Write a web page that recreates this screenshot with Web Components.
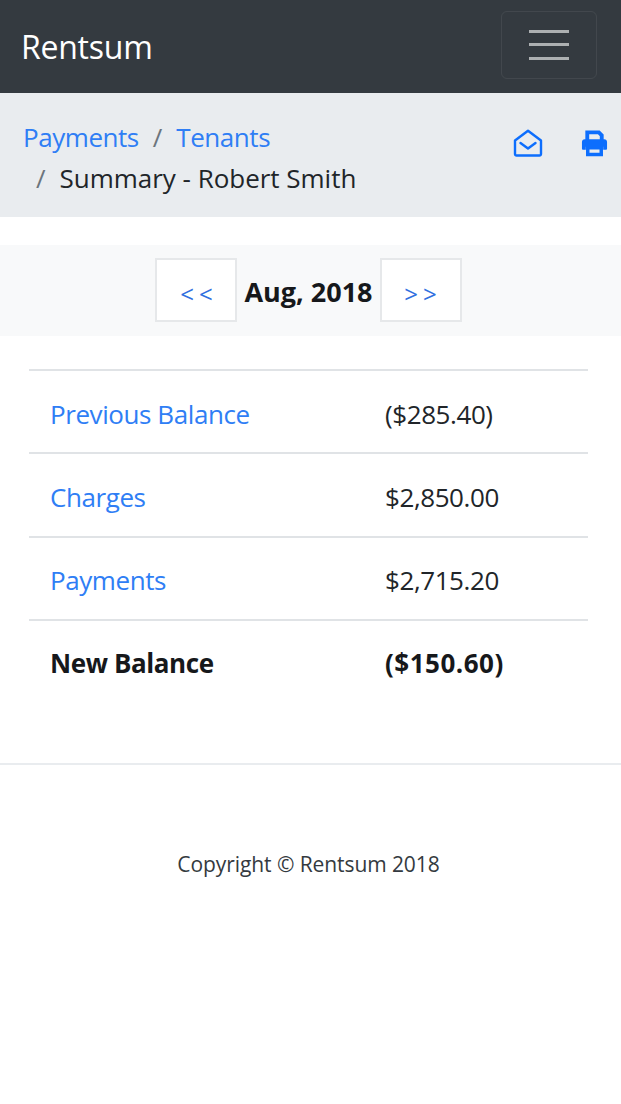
<!DOCTYPE html>
<html>
<head>
<meta charset="utf-8">
<title>Rentsum</title>
<style>
html, body { margin: 0; padding: 0; background: #fff; }
body { font-family: 'Open Sans', 'Noto Sans', 'Liberation Sans', sans-serif; color: #212529; font-size: 24px; }
</style>
</head>
<body>
<rs-navbar brand="Rentsum"></rs-navbar>
<rs-crumbs></rs-crumbs>
<rs-pager month="Aug, 2018"></rs-pager>
<rs-summary></rs-summary>
<rs-footer></rs-footer>
<script>
// Small page chrome for the tenant summary view.

class RsNavbar extends HTMLElement {
  connectedCallback() {
    this.attachShadow({ mode: 'open' });
    this.shadowRoot.innerHTML = `
<style>
:host { display: flex; align-items: center; justify-content: space-between; height: 93px; box-sizing: border-box; padding: 0 24px 4px 21px; background: #343a40; }
.brand { color: #fff; font-size: 32px; letter-spacing: -0.25px; line-height: 40px; padding-top: 4px; }
.toggler { width: 96px; height: 68px; box-sizing: border-box; border: 1.5px solid rgba(255,255,255,0.07); border-radius: 6px; display: flex; align-items: center; justify-content: center; }
svg { width: 42px; height: 44px; display: block; }
</style>
<span class="brand">${this.getAttribute('brand')}</span>
<div class="toggler">
  <svg viewBox="0 0 42 44"><path d="M1 8.5H41M1 21.5H41M1 35.5H41" stroke="rgba(255,255,255,0.6)" stroke-width="3" fill="none"/></svg>
</div>`;
  }
}

class RsCrumbs extends HTMLElement {
  connectedCallback() {
    this.attachShadow({ mode: 'open' });
    this.shadowRoot.innerHTML = `
<style>
:host { display: flex; justify-content: space-between; height: 124px; box-sizing: border-box; padding: 25px 13px 0 23px; background: #e9ecef; font-size: 26px; line-height: 40px; }
a { color: #2f7ef5; text-decoration: none; letter-spacing: -0.45px; }
.sep { color: #6c757d; padding: 0 14px; }
.row { display: block; white-space: nowrap; }
.row.first { margin-top: -1px; margin-bottom: 1px; }
.row.second { margin-left: -1px; letter-spacing: -0.02px; }
.icons { display: flex; gap: 38px; padding-top: 11px; align-items: flex-start; }
svg { display: block; height: 28px; fill: none; }
</style>
<div>
  <span class="row first"><a href="#">Payments</a><span class="sep">/</span><a href="#">Tenants</a></span>
  <span class="row second"><span class="sep">/</span>Summary - Robert Smith</span>
</div>
<div class="icons">
  <svg viewBox="0 0 30 28" width="30"><path d="M2 11.5 15 1.8 28 11.5V25a1.5 1.5 0 0 1-1.5 1.5h-23A1.5 1.5 0 0 1 2 25Z" stroke="#0d6efd" stroke-width="2.4" stroke-linejoin="round"/><path d="M7.5 14 15 19.5 22.5 14" stroke="#0d6efd" stroke-width="2.4" stroke-linecap="round" stroke-linejoin="round"/></svg>
  <svg viewBox="0 0 28 28" width="27"><path d="M6.5 12V3h12l3 3v6" stroke="#0d6efd" stroke-width="4"/><path d="M4 10h20a3 3 0 0 1 3 3v7a1 1 0 0 1-1 1h-3v-3H5v3H2a1 1 0 0 1-1-1v-7a3 3 0 0 1 3-3Z" fill="#0d6efd"/><path d="M7 19h14v7H7Z" stroke="#0d6efd" stroke-width="3.6"/></svg>
</div>`;
  }
}

class RsPager extends HTMLElement {
  connectedCallback() {
    this.attachShadow({ mode: 'open' });
    this.shadowRoot.innerHTML = `
<style>
:host { display: flex; align-items: flex-start; justify-content: center; gap: 7px; height: 91px; box-sizing: border-box; padding: 13px 4px 0 0; margin-top: 28px; background: #f8f9fa; }
.btn { width: 82px; height: 64px; box-sizing: border-box; background: #fff; border: 2px solid #e6e8ea; color: #2f6fe0; font-size: 24px; letter-spacing: 5px; display: flex; align-items: center; justify-content: center; padding: 6px 0 0 5px; text-decoration: none; }
.month { font-weight: 700; font-size: 27px; line-height: 65px; color: #16181b; padding-top: 1px; }
</style>
<a class="btn" href="#">&lt;&lt;</a>
<span class="month">${this.getAttribute('month')}</span>
<a class="btn" href="#">&gt;&gt;</a>`;
  }
}

const RS_ROWS = [
  ['Previous Balance', '($285.40)'],
  ['Charges', '$2,850.00'],
  ['Payments', '$2,715.20'],
];

class RsSummary extends HTMLElement {
  connectedCallback() {
    this.attachShadow({ mode: 'open' });
    const rows = RS_ROWS.map(r => `<div class="row"><a href="#">${r[0]}</a><span>${r[1]}</span></div>`).join('');
    this.shadowRoot.innerHTML = `
<style>
:host { display: block; margin: 33px 33px 0 29px; font-size: 26px; letter-spacing: -0.42px; color: #212529; }
.row { display: grid; grid-template-columns: 335px 1fr; align-items: center; height: 83.4px; box-sizing: border-box; padding: 4px 0 0 21px; border-top: 2px solid #e0e3e6; }
a { color: #2f7ef5; text-decoration: none; }
.total { font-weight: 700; color: #16181b; letter-spacing: -0.4px; padding-top: 3px; }
.total span + span { letter-spacing: 0.5px; }
</style>
${rows}
<div class="row total"><span>New Balance</span><span>($150.60)</span></div>`;
  }
}

class RsFooter extends HTMLElement {
  connectedCallback() {
    this.attachShadow({ mode: 'open' });
    this.shadowRoot.innerHTML = `
<style>
:host { display: block; margin-top: 60px; border-top: 2px solid #e9ecef; padding: 85px 4px 0 0; text-align: center; font-size: 21px; letter-spacing: -0.08px; color: #343a40; }
</style>
Copyright &copy; Rentsum 2018`;
  }
}

customElements.define('rs-navbar', RsNavbar);
customElements.define('rs-crumbs', RsCrumbs);
customElements.define('rs-pager', RsPager);
customElements.define('rs-summary', RsSummary);
customElements.define('rs-footer', RsFooter);
</script>
</body>
</html>
